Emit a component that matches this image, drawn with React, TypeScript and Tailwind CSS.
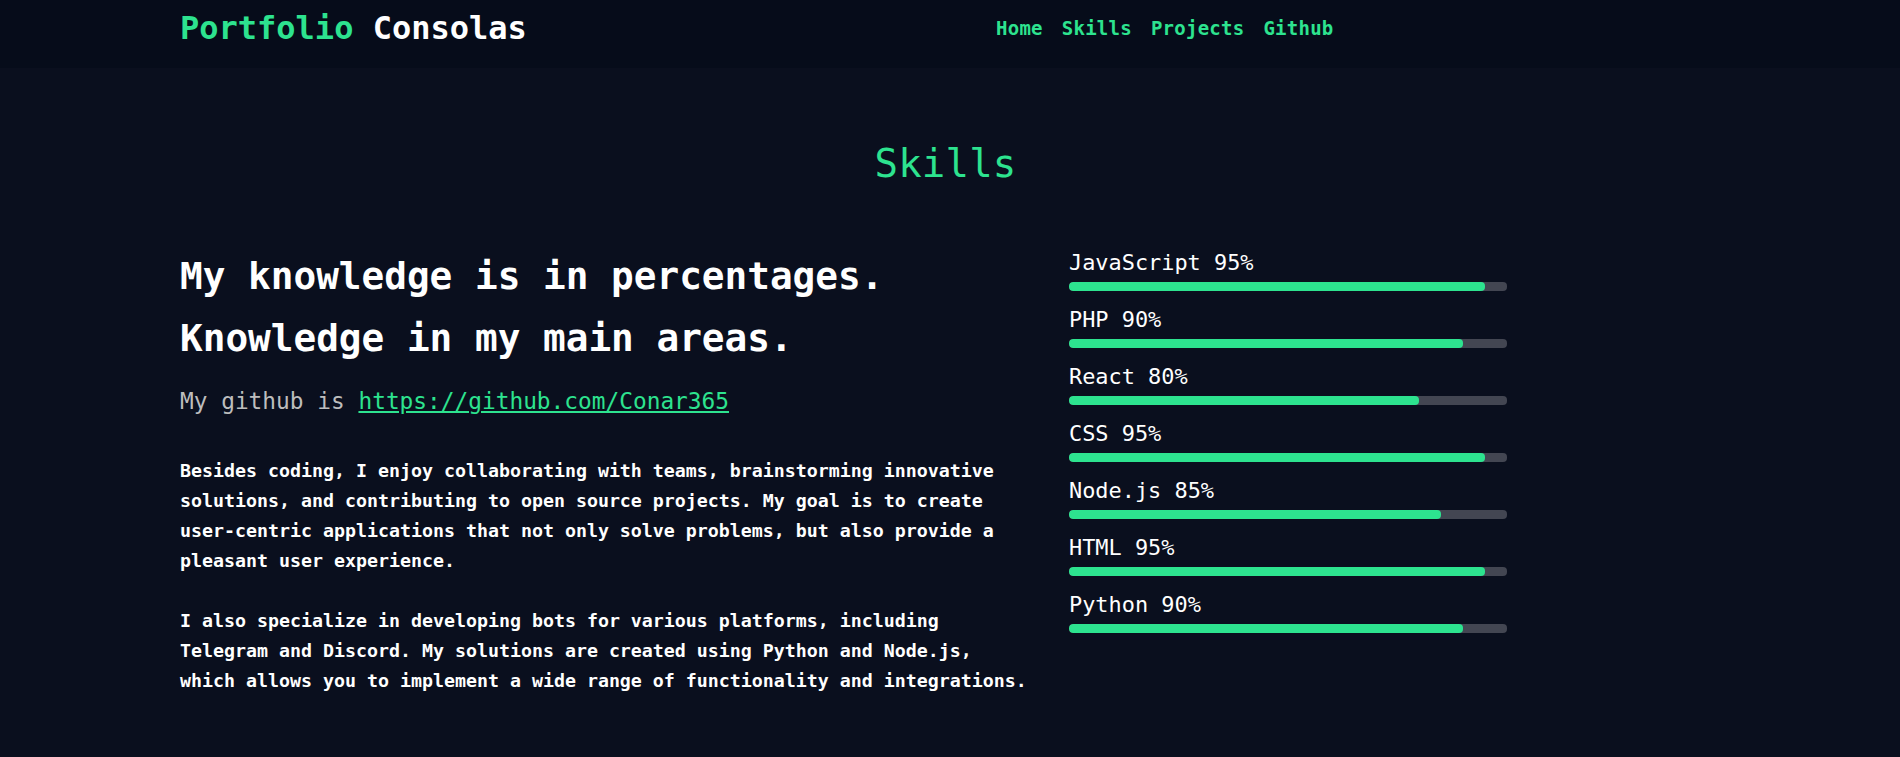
const navLinks = ['Home', 'Skills', 'Projects', 'Github'];

const skills = [
  { name: 'JavaScript', level: 95 },
  { name: 'PHP', level: 90 },
  { name: 'React', level: 80 },
  { name: 'CSS', level: 95 },
  { name: 'Node.js', level: 85 },
  { name: 'HTML', level: 95 },
  { name: 'Python', level: 90 },
];

const mono = "font-['DejaVu_Sans_Mono','Liberation_Mono',monospace]";

function Header() {
  return (
    <header className="h-[68px] bg-[#060c1a]">
      <div className="flex items-start pl-[180px]">
        <a href="#" className="w-[816px] pt-[12px] text-[32px] leading-[32px] font-bold">
          <span className="text-[#2de38f]">Portfolio</span>
          <span className="text-white"> Consolas</span>
        </a>
        <nav className="flex gap-[19px] pt-[19px]">
          {navLinks.map((link) => (
            <a
              key={link}
              href={`#${link.toLowerCase()}`}
              className="text-[19px] leading-[19px] tracking-[0.25px] font-bold text-[#2de38f]"
            >
              {link}
            </a>
          ))}
        </nav>
      </div>
    </header>
  );
}

function SkillBar({ name, level }: { name: string; level: number }) {
  return (
    <div>
      <p className="text-[21.9px] leading-[24px] text-white">
        {name} {level}%
      </p>
      <div className="mt-[7px] h-[9px] w-full rounded-[4px] bg-[#434652] overflow-hidden">
        <div className="h-full rounded-[4px] bg-[#2de38f]" style={{ width: `${level}%` }} />
      </div>
    </div>
  );
}

export default function App() {
  return (
    <div className={`min-h-screen bg-[#0a0f1e] ${mono}`}>
      <Header />

      <section id="skills" className="pt-[76px] pb-16">
        <h1 className="pr-[9px] text-center text-[39px] leading-[39px] tracking-[0.2px] text-[#2de38f]">
          Skills
        </h1>

        <div className="mt-[63px] flex items-start gap-[37px] pl-[180px]">
          <div className="w-[852px]">
            <h2 className="text-[37.7px] leading-[61.5px] font-bold text-white">
              My knowledge is in percentages.
              <br />
              Knowledge in my main areas.
            </h2>
            <p className="mt-[17px] text-[22.8px] leading-[30px] text-[#bdbdbd]">
              My github is{' '}
              <a href="https://github.com/Conar365" className="text-[#2de38f] underline">
                https://github.com/Conar365
              </a>
            </p>
            <div className="mt-[40px] space-y-[30px] text-[18.27px] leading-[30px] font-bold text-white">
              <p>
                Besides coding, I enjoy collaborating with teams, brainstorming innovative
                solutions, and contributing to open source projects. My goal is to create
                user-centric applications that not only solve problems, but also provide a
                pleasant user experience.
              </p>
              <p>
                I also specialize in developing bots for various platforms, including
                Telegram and Discord. My solutions are created using Python and Node.js,
                which allows you to implement a wide range of functionality and integrations.
              </p>
            </div>
          </div>

          <div className="mt-[5px] flex w-[438px] flex-col gap-[17px]">
            {skills.map((skill) => (
              <SkillBar key={skill.name} name={skill.name} level={skill.level} />
            ))}
          </div>
        </div>
      </section>
    </div>
  );
}
